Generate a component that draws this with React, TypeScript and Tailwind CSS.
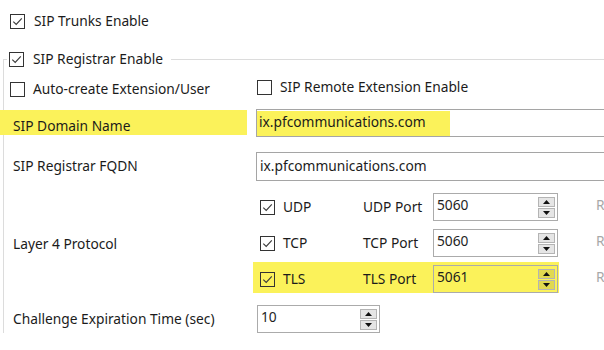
import React from "react";

const Check = ({ checked = false, clear = false }: { checked?: boolean; clear?: boolean }) => (
  <span
    className={`flex h-[15px] w-[15px] shrink-0 items-center justify-center border border-[#333333] ${clear ? "bg-transparent" : "bg-white"}`}
  >
    {checked && (
      <svg viewBox="0 0 13 13" className="h-[13px] w-[13px]">
        <path d="M2.3 6.6 L5.2 9.4 L10.8 3.4" fill="none" stroke="#3a3a3a" strokeWidth="1.15" />
      </svg>
    )}
  </span>
);

const SpinButton = ({ up = false }: { up?: boolean }) => (
  <span className="flex h-[10px] w-[17px] items-center justify-center border border-[#b4b4b4] bg-black/10">
    <svg viewBox="0 0 7 4" className="h-[4px] w-[7px]">
      {up ? <path d="M0 4 L3.5 0 L7 4 Z" fill="#111" /> : <path d="M0 0 L3.5 4 L7 0 Z" fill="#111" />}
    </svg>
  </span>
);

const Spin = ({ value, wide = false, clear = false }: { value: string; wide?: boolean; clear?: boolean }) => (
  <div
    className={`flex h-[28px] items-center border border-[#ababab] ${wide ? "w-[125px]" : "w-[123px]"} ${clear ? "bg-transparent" : "bg-white"}`}
  >
    <span className="flex-1 pl-[3px] pb-[3px] text-[#1e1e1e]">{value}</span>
    <div className="mr-[2px] flex flex-col gap-[1px]">
      <SpinButton up />
      <SpinButton />
    </div>
  </div>
);

const ProtoRow = ({ name, value, hl = false }: { name: string; value: string; hl?: boolean }) => (
  <div className="flex items-center">
    <div
      className={`ml-[253px] flex h-[31px] w-[306px] items-end ${hl ? "bg-[#fbf25a]" : ""}`}
    >
      <div className="flex h-[28px] w-full items-center">
        <span className="ml-[7px]">
          <Check checked clear={hl} />
        </span>
        <span className="ml-[8px] w-[80px]">{name}</span>
        <span className="w-[70px]">{name} Port</span>
        <Spin value={value} wide clear={hl} />
      </div>
    </div>
    <span className="ml-[37px] text-[#a8a8a8]">R</span>
  </div>
);

export default function App() {
  return (
    <div className="relative h-[350px] w-[604px] overflow-hidden bg-white font-['Noto_Sans',sans-serif] text-[13.75px] text-[#1b1b1b]">
      {/* SIP Trunks Enable */}
      <div className="ml-[10px] mt-[14px] flex h-[15px] items-center gap-[9px]">
        <Check checked />
        <span>SIP Trunks Enable</span>
      </div>

      <fieldset className="ml-[3px] mt-[21px] w-[700px] border-l border-t border-[#dcdcdc]">
        <legend className="ml-[3px] flex h-[18px] items-center gap-[9px] pl-[2px] pr-[8px]">
          <Check checked />
          <span>SIP Registrar Enable</span>
        </legend>

        <div className="-ml-[4px]">
          {/* checkboxes */}
          <div className="mt-[14px] flex h-[15px] items-center">
            <div className="ml-[10px] flex w-[247px] items-center gap-[8px]">
              <Check />
              <span>Auto-create Extension/User</span>
            </div>
            <div className="-mt-[4px] flex items-center gap-[8px]">
              <Check />
              <span>SIP Remote Extension Enable</span>
            </div>
          </div>

          {/* SIP Domain Name */}
          <div className="mt-[12px] flex h-[28px] items-start">
            <div className="mt-[1px] flex h-[25px] w-[247px] items-end bg-[#fbf25a] pl-[13px] leading-[18px]">
              SIP Domain Name
            </div>
            <div className="ml-[9px] flex h-[28px] w-[420px] items-center border border-[#a5a5a5] bg-white">
              <span className="flex h-[25px] w-[193px] items-center bg-[#fbf25a] pl-[2px] pb-[1px]">
                ix.pfcommunications.com
              </span>
            </div>
          </div>

          {/* SIP Registrar FQDN */}
          <div className="mt-[15px] flex h-[29px] items-center">
            <div className="w-[256px] pl-[13px]">SIP Registrar FQDN</div>
            <div className="flex h-[29px] w-[420px] items-center border border-[#a5a5a5] bg-white pl-[3px]">
              ix.pfcommunications.com
            </div>
          </div>

          {/* Layer 4 Protocol */}
          <div className="relative mt-[9px]">
            <div className="absolute left-[13px] top-[44px]">Layer 4 Protocol</div>
            <ProtoRow name="UDP" value="5060" />
            <div className="mt-[5px]">
              <ProtoRow name="TCP" value="5060" />
            </div>
            <div className="mt-[5px]">
              <ProtoRow name="TLS" value="5061" hl />
            </div>
          </div>

          {/* Challenge Expiration Time */}
          <div className="mt-[12px] flex h-[28px] items-center">
            <div className="w-[257px] pl-[13px]">Challenge Expiration Time (sec)</div>
            <Spin value="10" />
          </div>
        </div>
      </fieldset>
    </div>
  );
}
